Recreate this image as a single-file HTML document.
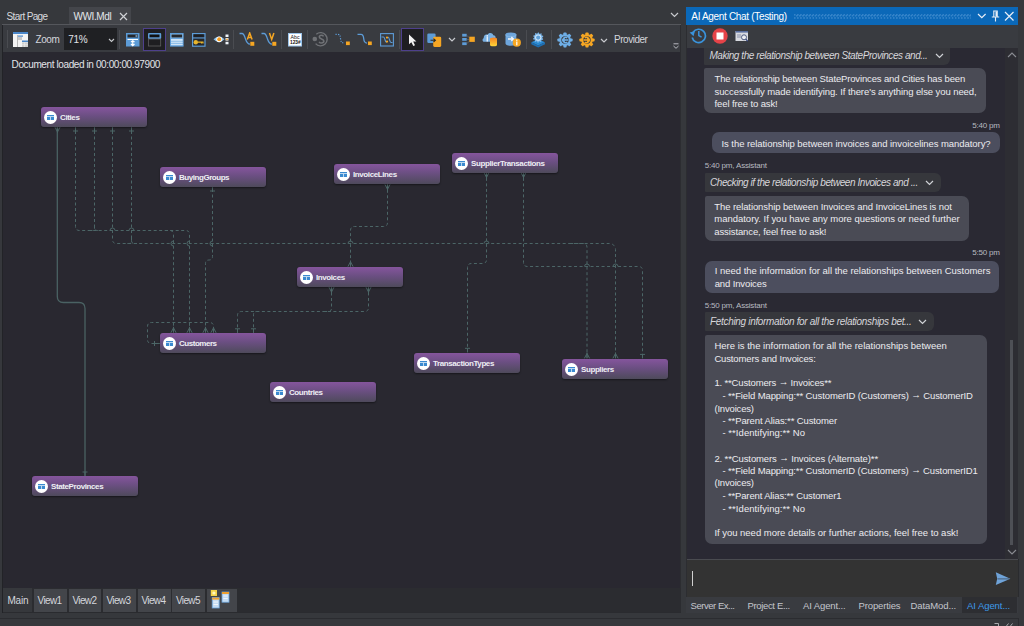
<!DOCTYPE html><html><head><meta charset="utf-8"><style>
html,body{margin:0;padding:0;}
body{width:1024px;height:626px;overflow:hidden;position:relative;background:#36383c;font-family:"Liberation Sans",sans-serif;}
div{box-sizing:border-box;}
.node{position:absolute;width:106px;height:20px;border-radius:3px;background:linear-gradient(#85559d,#6b4f82 45%,#4e4a5b);box-shadow:0 1px 2px rgba(0,0,0,.45);}
.node .c{position:absolute;left:3px;top:4px;width:13px;height:13px;border-radius:50%;background:#fff;}
.node .c i{position:absolute;left:3px;top:3.6px;width:6.5px;height:5px;background:#3b8ad0;}
.node .c i:before{content:"";position:absolute;left:0;top:1.6px;width:6.5px;height:0.7px;background:#bcd8f0;}
.node .c i:after{content:"";position:absolute;left:3px;top:1.6px;width:0.7px;height:3.4px;background:#bcd8f0;}
</style></head><body>
<div style="position:absolute;left:69px;top:7px;width:62px;height:17px;background:#44464b;"></div>
<div style="position:absolute;left:6.60px;top:12.00px;font-size:10px;line-height:10px;color:#d8dade;letter-spacing:-0.639px;white-space:nowrap;">Start Page</div>
<div style="position:absolute;left:73.40px;top:12.00px;font-size:10px;line-height:10px;color:#e4e6ea;letter-spacing:-0.374px;white-space:nowrap;">WWI.Mdl</div>
<svg style="position:absolute;left:119px;top:12px" width="9" height="9"><path d="M1 1L8 8M8 1L1 8" stroke="#d0d2d6" stroke-width="1.2"/></svg>
<svg style="position:absolute;left:670px;top:12px" width="9" height="6"><path d="M1 1L4.5 4.5L8 1" stroke="#c8cace" stroke-width="1.2" fill="none"/></svg>
<div style="position:absolute;left:2px;top:24px;width:679px;height:1px;background:#55575c;"></div>
<div style="position:absolute;left:2px;top:25px;width:678px;height:27px;background:#393b40;"></div>
<div style="position:absolute;left:7px;top:30px;width:1px;height:18px;background:#4a4c51;"></div>
<div style="position:absolute;left:64px;top:28px;width:53px;height:22px;background:#1f2023;"></div>
<div style="position:absolute;left:35.60px;top:35.00px;font-size:10px;line-height:10px;color:#d4d6dc;letter-spacing:-0.454px;white-space:nowrap;">Zoom</div>
<div style="position:absolute;left:68.30px;top:35.00px;font-size:10px;line-height:10px;color:#e0e2e6;letter-spacing:-0.357px;white-space:nowrap;">71%</div>
<svg style="position:absolute;left:108px;top:38px" width="7" height="5"><path d="M1 1L3.5 3.5L6 1" stroke="#c8cace" stroke-width="1.1" fill="none"/></svg>
<div style="position:absolute;left:119px;top:30px;width:1px;height:19px;background:#4a4c51;"></div>
<div style="position:absolute;left:233px;top:30px;width:1px;height:19px;background:#4a4c51;"></div>
<div style="position:absolute;left:281px;top:30px;width:1px;height:19px;background:#4a4c51;"></div>
<div style="position:absolute;left:307px;top:30px;width:1px;height:19px;background:#4a4c51;"></div>
<div style="position:absolute;left:399px;top:30px;width:1px;height:19px;background:#4a4c51;"></div>
<div style="position:absolute;left:526px;top:30px;width:1px;height:19px;background:#4a4c51;"></div>
<div style="position:absolute;left:551px;top:30px;width:1px;height:19px;background:#4a4c51;"></div>
<div style="position:absolute;left:143px;top:28px;width:23px;height:23px;background:#1e1e21;border:1px solid #4e408c;"></div>
<div style="position:absolute;left:401px;top:28px;width:23px;height:23px;background:#1e1e21;border:1px solid #4e408c;"></div>
<svg style="position:absolute;left:13px;top:32px" width="15" height="15" viewBox="0 0 15 15"><rect x="0" y="0" width="15" height="15" fill="#f4f4f4"/><rect x="0" y="0" width="15" height="2" fill="#4a86c8"/><rect x="4" y="3" width="1" height="12" fill="#b8b8b8"/><rect x="5" y="3.5" width="5" height="1.2" fill="#4a86c8"/><rect x="5" y="5" width="4" height="3" fill="#c8c8c8"/><rect x="9" y="8.5" width="6" height="1.6" fill="#4a86c8"/><rect x="9" y="10.5" width="6" height="4.5" fill="#cfcfcf"/><path d="M11.5 10.5V15M9 12.7H15" stroke="#eee" stroke-width=".6"/></svg>
<svg style="position:absolute;left:125.5px;top:32.5px" width="14" height="14" viewBox="0 0 14 14"><rect x="0" y="0" width="13.5" height="13.5" fill="#5d9cd7"/><rect x="1.5" y="1.5" width="10.5" height="3" fill="#26282c"/><rect x="9.5" y="2.3" width="2" height="1.4" fill="#8fb8e0"/><rect x="1.5" y="6" width="10.5" height="1" fill="#fff"/><path d="M6.75 7.5V12.5M5 9L6.75 7.7L8.5 9M5 11L6.75 12.6L8.5 11" stroke="#fff" stroke-width="1.2" fill="none"/></svg>
<svg style="position:absolute;left:148px;top:33px" width="14" height="14" viewBox="0 0 14 14"><rect x="0" y="0" width="13.2" height="6" rx="1" fill="#5d9cd7"/><rect x="1.5" y="1.5" width="10" height="2.8" fill="#111"/><rect x="0.5" y="6" width="12.2" height="7" fill="none" stroke="#5e5e60" stroke-width="0.8"/></svg>
<svg style="position:absolute;left:169.5px;top:32.5px" width="14" height="14" viewBox="0 0 14 14"><rect x="0.5" y="0.5" width="12.6" height="12.6" fill="#8fc0ea" stroke="#5d9cd7"/><rect x="1.5" y="1.5" width="10.6" height="3" fill="#26282c"/><rect x="1" y="5" width="11.6" height="1" fill="#6aa5dc"/><rect x="1" y="6.3" width="11.6" height="1.3" fill="#e8f2fb"/><rect x="1" y="8.8" width="11.6" height="1" fill="#d0e4f6"/><rect x="1" y="11" width="11.6" height="1" fill="#d0e4f6"/></svg>
<svg style="position:absolute;left:192px;top:32.5px" width="14" height="14" viewBox="0 0 14 14"><rect x="0.6" y="0.6" width="12.4" height="12.6" fill="#26282c" stroke="#5d9cd7" stroke-width="1.2"/><rect x="0.6" y="4.4" width="12.4" height="1.1" fill="#5d9cd7"/><rect x="2" y="1.6" width="9.5" height="2" fill="#1c1d20"/><circle cx="3.8" cy="9.2" r="2.2" fill="#e8b52c"/><path d="M5.5 9.2H11.5M9.5 9.2V10.6M11 9.2V10.4" stroke="#e8b52c" stroke-width="1.2"/></svg>
<svg style="position:absolute;left:212.5px;top:34px" width="16" height="11" viewBox="0 0 16 11"><path d="M0.5 5.3Q6 -0.5 11.5 5.3Q6 11 0.5 5.3Z" fill="#8ec4ee"/><circle cx="6.2" cy="5.3" r="2.9" fill="#fff"/><circle cx="6.2" cy="5.3" r="2" fill="#f29a1e"/><rect x="12.5" y="0.5" width="3" height="2.5" fill="#eef4fa"/><rect x="12.5" y="4" width="3" height="2.6" fill="#eef4fa"/><circle cx="14" cy="5.3" r="0.9" fill="#f29a1e"/><rect x="12.5" y="7.8" width="3" height="2.5" fill="#eef4fa"/></svg>
<svg style="position:absolute;left:238.5px;top:32px" width="16" height="15" viewBox="0 0 16 15"><path d="M0.5 1.5H3C5 1.5 5.5 4 6.5 7C7.5 10 8.5 12 11 12.2" stroke="#5d9cd7" stroke-width="1.3" fill="none"/><path d="M8.3 7.5L10.7 1L13.1 7.5M9.1 5.4H12.3" stroke="#f5a623" stroke-width="1.5" fill="none"/><rect x="11.3" y="9.8" width="4" height="4" fill="#f5a623"/></svg>
<svg style="position:absolute;left:260.5px;top:32px" width="16" height="15" viewBox="0 0 16 15"><path d="M0.5 1.5H3C5 1.5 5.5 4 6.5 7C7.5 10 8.5 12 11 12.2" stroke="#5d9cd7" stroke-width="1.3" fill="none"/><path d="M8.5 1L10.7 7.5L12.9 1" stroke="#f5a623" stroke-width="1.5" fill="none"/><rect x="11.3" y="9.8" width="4" height="4" fill="#f5a623"/></svg>
<svg style="position:absolute;left:287.5px;top:32.5px" width="14" height="14" viewBox="0 0 14 14"><rect x="0.5" y="0.5" width="13" height="12.5" fill="#fff" stroke="#9cc4ea"/><text x="2.6" y="6.1" font-family="Liberation Sans" font-size="5.2" fill="#111">Abc</text><text x="2" y="11.4" font-family="Liberation Sans" font-size="4.8" font-weight="bold" fill="#111">123#</text></svg>
<svg style="position:absolute;left:311.5px;top:31px" width="17" height="16" viewBox="0 0 17 16"><path d="M4.3 3.2A6.6 6.6 0 1 1 3.6 12.6" stroke="#707276" stroke-width="1.4" fill="none"/><circle cx="2.8" cy="8" r="2.3" fill="#707276"/><path d="M11.6 5.4C11 4.6 10.3 4.3 9.5 4.3C8.2 4.3 7.3 5 7.3 6.1C7.3 8.4 11.9 7.6 11.9 10.1C11.9 11.3 10.9 12 9.5 12C8.4 12 7.6 11.6 7.1 10.8" stroke="#707276" stroke-width="1.5" fill="none"/></svg>
<svg style="position:absolute;left:334.5px;top:33px" width="16" height="14" viewBox="0 0 16 14"><path d="M0.5 1.3H3C5 1.3 5.3 3 5.5 5.5C5.7 8.5 6.5 10 9.5 10.2" stroke="#5d9cd7" stroke-width="1.2" stroke-dasharray="1.2 1.3" fill="none"/><rect x="11" y="8.5" width="3.8" height="3.6" fill="#f5a623"/></svg>
<svg style="position:absolute;left:357px;top:33px" width="16" height="14" viewBox="0 0 16 14"><path d="M0.5 1.3H4C6 1.3 6.5 3 6.7 5.5C6.9 8.5 7.5 10 10 10.2" stroke="#5d9cd7" stroke-width="1.3" fill="none"/><rect x="11" y="8.5" width="3.8" height="3.6" fill="#f5a623"/></svg>
<svg style="position:absolute;left:379.5px;top:32.5px" width="15" height="14" viewBox="0 0 15 14"><rect x="0.6" y="0.6" width="12.8" height="12.4" fill="none" stroke="#5d9cd7" stroke-width="1.1"/><path d="M1.5 4H3.5C5 4 5 9.5 6.5 9.5M8 4C9.5 4 9.5 9.5 11 9.5H12.5" stroke="#5d9cd7" stroke-width="1.1" fill="none"/><circle cx="7" cy="4.6" r="1.1" fill="#f5a623"/><circle cx="7" cy="8.6" r="1.1" fill="#f5a623"/></svg>
<svg style="position:absolute;left:408px;top:34px" width="10" height="13" viewBox="0 0 10 13"><path d="M1 0.5V10.2L3.4 8.2L5.3 12L7 11.2L5.2 7.6H8.4Z" fill="#f2f2f2"/></svg>
<svg style="position:absolute;left:427px;top:32.5px" width="15" height="15" viewBox="0 0 15 15"><rect x="0.3" y="0.5" width="8.3" height="9.5" rx="1.3" fill="#5d9cd7"/><rect x="6.2" y="3.7" width="8" height="10.2" rx="1.3" fill="#f5a623"/><path d="M3.5 7.3H7.5M6.5 5.6L8.4 7.3L6.5 9" stroke="#2b2b2b" stroke-width="1.1" fill="none"/></svg>
<svg style="position:absolute;left:447.5px;top:37px" width="8" height="6" viewBox="0 0 8 6"><path d="M1 1L4 4L7 1" stroke="#c8cace" stroke-width="1.2" fill="none"/></svg>
<svg style="position:absolute;left:600px;top:37.5px" width="8" height="6" viewBox="0 0 8 6"><path d="M1 1L4 4L7 1" stroke="#c8cace" stroke-width="1.2" fill="none"/></svg>
<svg style="position:absolute;left:461.5px;top:32.5px" width="14" height="14" viewBox="0 0 14 14"><rect x="0.2" y="0.8" width="4.5" height="2.8" fill="#5d9cd7"/><rect x="0.2" y="5" width="4.5" height="2.8" fill="#5d9cd7"/><rect x="0.2" y="9.3" width="4.5" height="2.8" fill="#5d9cd7"/><path d="M4.7 2.2L7.5 5M4.7 6.4H7.3M4.7 10.7L7.5 8" stroke="#6b6e74" stroke-width=".7"/><rect x="7.3" y="3.7" width="5.5" height="5.2" fill="#f5a623"/></svg>
<svg style="position:absolute;left:482px;top:32px" width="16" height="15" viewBox="0 0 16 15"><path d="M2.2 9.8C0.2 9.8 0 7 1.7 6.3C1.5 3.5 3.5 2 5.5 2.8C6.5 0.5 10.5 0.3 11.3 3.3C13.2 3.3 14 5 13.5 6.5L12 9.8Z" fill="#79b0e2"/><rect x="4.6" y="4.5" width="1.3" height="5" fill="#f0f4f8"/><circle cx="5.25" cy="3.8" r="0.8" fill="#f0f4f8"/><defs><linearGradient id="gdb" x1="0" y1="0" x2="0" y2="1"><stop offset="0" stop-color="#f57f20"/><stop offset="1" stop-color="#ffd83a"/></linearGradient></defs><path d="M8 6.9A3.5 1.5 0 0 1 15 6.9V12.8A3.5 1.5 0 0 1 8 12.8Z" fill="url(#gdb)"/></svg>
<svg style="position:absolute;left:504.5px;top:32px" width="17" height="15" viewBox="0 0 17 15"><path d="M0.5 2.6A5.4 2.1 0 0 1 11.3 2.6V11.6A5.4 2.1 0 0 1 0.5 11.6Z" fill="#6ea6dc"/><path d="M0.5 2.6A5.4 2.1 0 0 0 11.3 2.6" stroke="#8bbbe6" stroke-width=".8" fill="none"/><path d="M3 7H8.3M6.3 5L8.5 7L6.3 9" stroke="#f4f8fc" stroke-width="1.3" fill="none"/><circle cx="11.8" cy="10.7" r="4.1" fill="#f5a623"/><rect x="11.2" y="9.5" width="1.2" height="3.8" fill="#fff"/><circle cx="11.8" cy="8.2" r=".7" fill="#fff"/></svg>
<svg style="position:absolute;left:531px;top:31.5px" width="15" height="16" viewBox="0 0 15 16"><path d="M0.3 10.3L7.2 7.3L14 10.3L7.2 13.5Z" fill="#2a8ad2"/><path d="M0.3 10.3V12.3L7.2 15.4L14 12.3V10.3L7.2 13.5Z" fill="#1d6fb4"/><path d="M7.00 0.40 L7.81 0.44 L8.31 1.65 L8.92 1.88 L10.09 1.28 L10.73 1.78 L10.42 3.06 L10.78 3.60 L12.08 3.80 L12.30 4.59 L11.30 5.44 L11.27 6.08 L12.20 7.01 L11.92 7.78 L10.61 7.88 L10.21 8.38 L10.42 9.68 L9.74 10.14 L8.62 9.45 L8.00 9.62 L7.40 10.80 L6.59 10.76 L6.09 9.55 L5.48 9.32 L4.31 9.92 L3.67 9.42 L3.98 8.14 L3.62 7.60 L2.32 7.40 L2.10 6.61 L3.10 5.76 L3.13 5.12 L2.20 4.19 L2.48 3.42 L3.79 3.32 L4.19 2.82 L3.98 1.52 L4.66 1.06 L5.78 1.75 L6.40 1.58Z" fill="#7bb6ea"/><circle cx="7.2" cy="5.6" r="3.1" fill="#cfe5f7"/><circle cx="7.2" cy="5.6" r="2.1" fill="#5fa0d9"/></svg>
<svg style="position:absolute;left:556.5px;top:31.5px" width="16" height="16" viewBox="0 0 16 16"><rect x="6.4" y="0.40000000000000036" width="3.2" height="4" rx="0.8" fill="#6eaee6" transform="rotate(0 8 8)"/><rect x="6.4" y="0.40000000000000036" width="3.2" height="4" rx="0.8" fill="#6eaee6" transform="rotate(45 8 8)"/><rect x="6.4" y="0.40000000000000036" width="3.2" height="4" rx="0.8" fill="#6eaee6" transform="rotate(90 8 8)"/><rect x="6.4" y="0.40000000000000036" width="3.2" height="4" rx="0.8" fill="#6eaee6" transform="rotate(135 8 8)"/><rect x="6.4" y="0.40000000000000036" width="3.2" height="4" rx="0.8" fill="#6eaee6" transform="rotate(180 8 8)"/><rect x="6.4" y="0.40000000000000036" width="3.2" height="4" rx="0.8" fill="#6eaee6" transform="rotate(225 8 8)"/><rect x="6.4" y="0.40000000000000036" width="3.2" height="4" rx="0.8" fill="#6eaee6" transform="rotate(270 8 8)"/><rect x="6.4" y="0.40000000000000036" width="3.2" height="4" rx="0.8" fill="#6eaee6" transform="rotate(315 8 8)"/><circle cx="8" cy="8" r="5.9" fill="#6eaee6"/><circle cx="8" cy="8" r="3.7" fill="#393b40"/><path d="M10.3 5.9A2.7 2.7 0 1 0 10.3 10.1" stroke="#6eaee6" stroke-width="1.4" fill="none"/><path d="M11.2 8H5.8M7.6 6.2L5.7 8L7.6 9.8" stroke="#6eaee6" stroke-width="1.3" fill="none"/></svg>
<svg style="position:absolute;left:578.6px;top:31.8px" width="16" height="16" viewBox="0 0 16 16"><rect x="6.4" y="0.40000000000000036" width="3.2" height="4" rx="0.8" fill="#f5a623" transform="rotate(0 8 8)"/><rect x="6.4" y="0.40000000000000036" width="3.2" height="4" rx="0.8" fill="#f5a623" transform="rotate(45 8 8)"/><rect x="6.4" y="0.40000000000000036" width="3.2" height="4" rx="0.8" fill="#f5a623" transform="rotate(90 8 8)"/><rect x="6.4" y="0.40000000000000036" width="3.2" height="4" rx="0.8" fill="#f5a623" transform="rotate(135 8 8)"/><rect x="6.4" y="0.40000000000000036" width="3.2" height="4" rx="0.8" fill="#f5a623" transform="rotate(180 8 8)"/><rect x="6.4" y="0.40000000000000036" width="3.2" height="4" rx="0.8" fill="#f5a623" transform="rotate(225 8 8)"/><rect x="6.4" y="0.40000000000000036" width="3.2" height="4" rx="0.8" fill="#f5a623" transform="rotate(270 8 8)"/><rect x="6.4" y="0.40000000000000036" width="3.2" height="4" rx="0.8" fill="#f5a623" transform="rotate(315 8 8)"/><circle cx="8" cy="8" r="5.9" fill="#f5a623"/><circle cx="8" cy="8" r="3.7" fill="#393b40"/><path d="M5.8 5.9A2.7 2.7 0 1 1 5.8 10.1" stroke="#f5a623" stroke-width="1.4" fill="none"/><path d="M4.6 8H9.8M8.1 6.2L10 8L8.1 9.8" stroke="#f5a623" stroke-width="1.3" fill="none"/></svg>
<svg style="position:absolute;left:672px;top:42.8px" width="8" height="8" viewBox="0 0 8 8"><path d="M1.5 0.8H6.5M1.5 3L4 5.3L6.5 3" stroke="#b8bac0" stroke-width="1" fill="none"/></svg>
<div style="position:absolute;left:614.00px;top:35.00px;font-size:10px;line-height:10px;color:#d4d6dc;letter-spacing:-0.477px;white-space:nowrap;">Provider</div>
<div style="position:absolute;left:2px;top:52px;width:679px;height:536px;background:#292830;"></div>
<div style="position:absolute;left:680px;top:25px;width:1px;height:588px;background:#2c2d31;"></div>
<div style="position:absolute;left:11.60px;top:60.00px;font-size:10px;line-height:10px;color:#e2e4e8;letter-spacing:-0.389px;white-space:nowrap;">Document loaded in 00:00:00.97900</div>
<svg style="position:absolute;left:0;top:0" width="681" height="588" fill="none">
<path d="M57.3 127 L57.30 296.50 Q57.3 302.5 63.30 302.50 L79.00 302.50 Q85 302.5 85.00 308.50 L85 476" stroke="#4a6263" stroke-width="1.3"/>
<path d="M75.5 131 L75.50 226.50 Q75.5 230.5 79.50 230.50 L185.50 230.50 Q189.5 230.5 189.50 234.50 L189.5 332.8" stroke="#4c6667" stroke-width="1" stroke-dasharray="3 2.5"/>
<path d="M94.5 131 L94.50 227.75 Q94.5 230.5 97.25 230.50 L100 230.5" stroke="#4c6667" stroke-width="1" stroke-dasharray="3 2.5"/>
<path d="M94.5 226 L94.50 228.25 Q94.5 230.5 92.25 230.50 L89 230.5" stroke="#4c6667" stroke-width="1" stroke-dasharray="3 2.5"/>
<path d="M112.5 131 L112.50 239.50 Q112.5 243.5 116.50 243.50 L609.53 243.50 Q612 243.5 613.75 245.25 L613.75 245.25 Q615.5 247 615.50 249.47 L615.5 358.4" stroke="#4c6667" stroke-width="1" stroke-dasharray="3 2.5"/>
<path d="M131.5 131 L131.50 240.75 Q131.5 243.5 134.25 243.50 L137 243.5" stroke="#4c6667" stroke-width="1" stroke-dasharray="3 2.5"/>
<path d="M131.5 238 L131.50 240.75 Q131.5 243.5 128.75 243.50 L125 243.5" stroke="#4c6667" stroke-width="1" stroke-dasharray="3 2.5"/>
<path d="M165 230.5 L169.50 230.50 Q173.5 230.5 173.50 234.50 L173.5 332.8" stroke="#4c6667" stroke-width="1" stroke-dasharray="3 2.5"/>
<path d="M212.5 189 L212.50 256.50 Q212.5 260 209.00 260.00 L209.00 260.00 Q205.5 260 205.50 263.50 L205.5 332.8" stroke="#4c6667" stroke-width="1" stroke-dasharray="3 2.5"/>
<path d="M160 343.5 L151.50 343.50 Q147.5 343.5 147.50 339.50 L147.50 326.50 Q147.5 322.5 151.50 322.50 L209.50 322.50 Q213.5 322.5 213.50 326.50 L213.5 332.8" stroke="#4c6667" stroke-width="1" stroke-dasharray="3 2.5"/>
<path d="M237.5 332.8 L237.50 315.50 Q237.5 311.5 241.50 311.50 L364.50 311.50 Q368.5 311.5 368.50 307.50 L368.5 287" stroke="#4c6667" stroke-width="1" stroke-dasharray="3 2.5"/>
<path d="M253.5 332.8 L253.50 314.75 Q253.5 311.5 256.75 311.50 L260 311.5" stroke="#4c6667" stroke-width="1" stroke-dasharray="3 2.5"/>
<path d="M331.5 287 L331.50 308.25 Q331.5 311.5 328.25 311.50 L325 311.5" stroke="#4c6667" stroke-width="1" stroke-dasharray="3 2.5"/>
<path d="M387.5 184.3 L387.50 222.50 Q387.5 226.5 383.50 226.50 L354.50 226.50 Q350.5 226.5 350.50 230.50 L350.5 266.7" stroke="#4c6667" stroke-width="1" stroke-dasharray="3 2.5"/>
<path d="M486.5 172.4 L486.50 259.50 Q486.5 263.5 482.50 263.50 L471.50 263.50 Q467.5 263.5 467.50 267.50 L467.5 352.3" stroke="#4c6667" stroke-width="1" stroke-dasharray="3 2.5"/>
<path d="M523.5 172.4 L523.50 262.50 Q523.5 266.5 527.50 266.50 L638.50 266.50 Q642.5 266.5 642.50 270.50 L642.5 358.4" stroke="#4c6667" stroke-width="1" stroke-dasharray="3 2.5"/>
<path d="M570 243.5 L583.00 243.50 Q587 243.5 587.00 247.50 L587 358.4" stroke="#4c6667" stroke-width="1" stroke-dasharray="3 2.5"/>
<path d="M73.0 131 L78.0 131 M75.5 127 L75.5 131 M92.0 131 L97.0 131 M94.5 127 L94.5 131 M110.0 131 L115.0 131 M112.5 127 L112.5 131 M129.0 131 L134.0 131 M131.5 127 L131.5 131 M54.9 127 L57.5 132 L60.1 127 M57.5 127 L57.5 133 M210.0 191 L215.0 191 M212.5 187 L212.5 191 M170.9 332.8 L173.5 327.8 L176.1 332.8 M173.5 332.8 L173.5 326.8 M186.9 332.8 L189.5 327.8 L192.1 332.8 M189.5 332.8 L189.5 326.8 M202.9 332.8 L205.5 327.8 L208.1 332.8 M205.5 332.8 L205.5 326.8 M210.9 332.8 L213.5 327.8 L216.1 332.8 M213.5 332.8 L213.5 326.8 M235.0 328.8 L240.0 328.8 M237.5 332.8 L237.5 328.8 M251.0 328.8 L256.0 328.8 M253.5 332.8 L253.5 328.8 M347.9 266.7 L350.5 261.7 L353.1 266.7 M350.5 266.7 L350.5 260.7 M328.9 287 L331.5 292 L334.1 287 M331.5 287 L331.5 293 M365.9 287 L368.5 292 L371.1 287 M368.5 287 L368.5 293 M384.9 184.3 L387.5 189.3 L390.1 184.3 M387.5 184.3 L387.5 190.3 M483.9 172.4 L486.5 177.4 L489.1 172.4 M486.5 172.4 L486.5 178.4 M520.9 172.4 L523.5 177.4 L526.1 172.4 M523.5 172.4 L523.5 178.4 M465.0 348.3 L470.0 348.3 M467.5 352.3 L467.5 348.3 M584.4 358.4 L587 353.4 L589.6 358.4 M587 358.4 L587 352.4 M612.9 358.4 L615.5 353.4 L618.1 358.4 M615.5 358.4 L615.5 352.4 M640.0 354.4 L645.0 354.4 M642.5 358.4 L642.5 354.4 M82.5 472 L87.5 472 M85 476 L85 472 M160 343.5 L154.5 343.5 M154.5 341 L154.5 346 " stroke="#4c6667" stroke-width="1"/>
<path d="M110.0 230.5 A2.5 2.5 0 0 1 115.0 230.5 M129.0 230.5 A2.5 2.5 0 0 1 134.0 230.5 M348.0 243.5 A2.5 2.5 0 0 1 353.0 243.5 M484.0 243.5 A2.5 2.5 0 0 1 489.0 243.5 M584.5 266.5 A2.5 2.5 0 0 1 589.5 266.5 M613.0 266.5 A2.5 2.5 0 0 1 618.0 266.5 M173.5 241.0 A2.5 2.5 0 0 0 173.5 246.0 M189.5 241.0 A2.5 2.5 0 0 0 189.5 246.0 M212.5 241.0 A2.5 2.5 0 0 0 212.5 246.0 " stroke="#4c6667" stroke-width="1"/>
</svg>
<div class="node" style="left:41px;top:107px;"><div class="c"><i></i></div></div>
<div style="position:absolute;left:60.00px;top:114.00px;font-size:8px;line-height:8px;color:#eeeef4;letter-spacing:-0.392px;white-space:nowrap;font-weight:bold;">Cities</div>
<div class="node" style="left:160px;top:167px;"><div class="c"><i></i></div></div>
<div style="position:absolute;left:179.00px;top:174.00px;font-size:8px;line-height:8px;color:#eeeef4;letter-spacing:-0.455px;white-space:nowrap;font-weight:bold;">BuyingGroups</div>
<div class="node" style="left:334px;top:164px;"><div class="c"><i></i></div></div>
<div style="position:absolute;left:353.00px;top:171.00px;font-size:8px;line-height:8px;color:#eeeef4;letter-spacing:-0.397px;white-space:nowrap;font-weight:bold;">InvoiceLines</div>
<div class="node" style="left:452px;top:153px;"><div class="c"><i></i></div></div>
<div style="position:absolute;left:471.00px;top:160.00px;font-size:8px;line-height:8px;color:#eeeef4;letter-spacing:-0.385px;white-space:nowrap;font-weight:bold;">SupplierTransactions</div>
<div class="node" style="left:297px;top:267px;"><div class="c"><i></i></div></div>
<div style="position:absolute;left:316.00px;top:274.00px;font-size:8px;line-height:8px;color:#eeeef4;letter-spacing:-0.412px;white-space:nowrap;font-weight:bold;">Invoices</div>
<div class="node" style="left:414px;top:353px;"><div class="c"><i></i></div></div>
<div style="position:absolute;left:433.00px;top:360.00px;font-size:8px;line-height:8px;color:#eeeef4;letter-spacing:-0.405px;white-space:nowrap;font-weight:bold;">TransactionTypes</div>
<div class="node" style="left:562px;top:359px;"><div class="c"><i></i></div></div>
<div style="position:absolute;left:581.00px;top:366.00px;font-size:8px;line-height:8px;color:#eeeef4;letter-spacing:-0.410px;white-space:nowrap;font-weight:bold;">Suppliers</div>
<div class="node" style="left:270px;top:382px;"><div class="c"><i></i></div></div>
<div style="position:absolute;left:289.00px;top:389.00px;font-size:8px;line-height:8px;color:#eeeef4;letter-spacing:-0.420px;white-space:nowrap;font-weight:bold;">Countries</div>
<div class="node" style="left:160px;top:333px;"><div class="c"><i></i></div></div>
<div style="position:absolute;left:179.00px;top:340.00px;font-size:8px;line-height:8px;color:#eeeef4;letter-spacing:-0.470px;white-space:nowrap;font-weight:bold;">Customers</div>
<div class="node" style="left:32px;top:476px;"><div class="c"><i></i></div></div>
<div style="position:absolute;left:51.00px;top:483.00px;font-size:8px;line-height:8px;color:#eeeef4;letter-spacing:-0.400px;white-space:nowrap;font-weight:bold;">StateProvinces</div>
<div style="position:absolute;left:2px;top:588px;width:679px;height:24px;background:#2b2c30;"></div>
<div style="position:absolute;left:3px;top:588px;width:29px;height:24px;background:#36383c;"></div>
<div style="position:absolute;left:34px;top:589px;width:33px;height:23px;background:#43454a;"></div>
<div style="position:absolute;left:69px;top:589px;width:32px;height:23px;background:#43454a;"></div>
<div style="position:absolute;left:103px;top:589px;width:33px;height:23px;background:#43454a;"></div>
<div style="position:absolute;left:138px;top:589px;width:33px;height:23px;background:#43454a;"></div>
<div style="position:absolute;left:172px;top:589px;width:33px;height:23px;background:#43454a;"></div>
<div style="position:absolute;left:207px;top:589px;width:30px;height:23px;background:#43454a;"></div>
<div style="position:absolute;left:7.50px;top:596.00px;font-size:10px;line-height:10px;color:#d4d6dc;letter-spacing:-0.225px;white-space:nowrap;">Main</div>
<div style="position:absolute;left:37.60px;top:596.00px;font-size:10px;line-height:10px;color:#d4d6dc;letter-spacing:-0.639px;white-space:nowrap;">View1</div>
<div style="position:absolute;left:72.50px;top:596.00px;font-size:10px;line-height:10px;color:#d4d6dc;letter-spacing:-0.639px;white-space:nowrap;">View2</div>
<div style="position:absolute;left:106.50px;top:596.00px;font-size:10px;line-height:10px;color:#d4d6dc;letter-spacing:-0.639px;white-space:nowrap;">View3</div>
<div style="position:absolute;left:141.50px;top:596.00px;font-size:10px;line-height:10px;color:#d4d6dc;letter-spacing:-0.639px;white-space:nowrap;">View4</div>
<div style="position:absolute;left:176.00px;top:596.00px;font-size:10px;line-height:10px;color:#d4d6dc;letter-spacing:-0.639px;white-space:nowrap;">View5</div>
<div style="position:absolute;left:2px;top:612px;width:679px;height:1px;background:#2a2b2f;"></div>
<div style="position:absolute;left:2px;top:25px;width:1px;height:588px;background:#222327;"></div>
<div style="position:absolute;left:0px;top:618px;width:1018px;height:1px;background:#2b2c30;"></div>
<div style="position:absolute;left:1018px;top:618px;width:1px;height:8px;background:#2b2c30;"></div>
<svg style="position:absolute;left:993px;top:623px" width="24" height="3"><path d="M1.5 0.5H5.5V3M13.5 3L15.5 0.5M19.5 0.5L17.5 3" stroke="#a8aaae" stroke-width="1" fill="none"/></svg>
<svg style="position:absolute;left:207px;top:589px" width="30" height="23"><rect x="3.8" y="1" width="6.2" height="6" fill="#f2d24a"/><circle cx="6.9" cy="4" r="1.6" fill="#fff6c0"/><rect x="5.2" y="8.6" width="7" height="10.4" fill="#c5dcf3" stroke="#6aa3db" stroke-width=".8"/><rect x="5.2" y="8.6" width="7" height="2" fill="#f0a030"/><path d="M6.5 13H11M6.5 15.5H11" stroke="#fff" stroke-width=".7"/><rect x="15" y="3" width="7" height="10.2" fill="#c5dcf3" stroke="#6aa3db" stroke-width=".8"/><rect x="15" y="3" width="7" height="2" fill="#f0a030"/><path d="M16.3 7H20.7M16.3 9.5H20.7" stroke="#fff" stroke-width=".7"/></svg>
<div style="position:absolute;left:686px;top:7px;width:332px;height:18px;background:#0b68b8;"></div>
<div style="position:absolute;left:794px;top:13.5px;width:177px;height:5px;background-image:radial-gradient(circle at 0.75px 0.75px,rgba(110,170,225,.4) 0.6px,transparent 0.9px);background-size:3.1px 3.2px;"></div>
<div style="position:absolute;left:795.5px;top:15.1px;width:176px;height:2px;background-image:radial-gradient(circle at 0.75px 0.75px,rgba(110,170,225,.4) 0.6px,transparent 0.9px);background-size:3.1px 3.2px;"></div>
<svg style="position:absolute;left:977px;top:13px" width="10" height="6"><path d="M1 1L4.8 4.6L8.6 1" stroke="#e8eef6" stroke-width="1.2" fill="none"/></svg>
<svg style="position:absolute;left:990px;top:10px" width="11" height="12"><path d="M3.2 1H7.8M3.8 1V6.5M7.2 1V6.5M1.8 7H9.2M5.5 7V11.5" stroke="#e8eef6" stroke-width="1.1" fill="none"/><rect x="5.5" y="1.5" width="1.7" height="5" fill="#e8eef6"/></svg>
<svg style="position:absolute;left:1004px;top:11px" width="11" height="11"><path d="M1 1L9.5 9.5M9.5 1L1 9.5" stroke="#e8eef6" stroke-width="1.2"/></svg>
<div style="position:absolute;left:691.30px;top:12.00px;font-size:10px;line-height:10px;color:#ffffff;letter-spacing:-0.324px;white-space:nowrap;">AI Agent Chat (Testing)</div>
<div style="position:absolute;left:686px;top:25px;width:332px;height:23px;background:#393b40;"></div>
<div style="position:absolute;left:686px;top:48px;width:332px;height:511px;background:#2a2933;"></div>
<svg style="position:absolute;left:688.5px;top:26.3px" width="18" height="18" viewBox="0 0 18 18"><path d="M4.1 6.3A6.7 6.7 0 1 1 3.2 11.5" stroke="#3a93dc" stroke-width="1.7" fill="none"/><path d="M0.6 6.5L4.6 10.3L5.8 5.2Z" fill="#3a93dc"/><path d="M9.8 5.1V9.6L12.6 11.2" stroke="#3a93dc" stroke-width="1.5" fill="none"/></svg>
<svg style="position:absolute;left:712px;top:28px" width="16" height="16" viewBox="0 0 16 16"><circle cx="8" cy="8" r="7.7" fill="#e54348"/><rect x="4.5" y="4.5" width="7" height="7" fill="#fff"/></svg>
<svg style="position:absolute;left:734.5px;top:29.5px" width="15" height="14" viewBox="0 0 15 14"><rect x="0.5" y="1" width="12.5" height="10" fill="#d8dae0"/><rect x="0.5" y="1" width="12.5" height="1.6" fill="#5a6fa0"/><rect x="2" y="4.5" width="4" height="1" fill="#8a8fa8"/><rect x="2" y="6.5" width="4" height="1" fill="#8a8fa8"/><circle cx="9" cy="7.3" r="2.5" fill="#e9ecf2" stroke="#4d5a80" stroke-width="1"/><path d="M10.8 9.2L12.8 11.3" stroke="#2a3a70" stroke-width="1.2"/></svg>
<div style="position:absolute;left:1005px;top:48px;width:13px;height:511px;background:#2d2d33;"></div>
<div style="position:absolute;left:704.4px;top:48px;width:245.4px;height:16.7px;background:#36373c;border-radius:0 0 6px 1px;"></div>
<div style="position:absolute;left:709.40px;top:51.00px;font-size:10px;line-height:10px;color:#d6d6da;letter-spacing:-0.440px;white-space:nowrap;font-style:italic;">Making the relationship between StateProvinces and...</div>
<svg style="position:absolute;left:934.5px;top:53px" width="9" height="6"><path d="M1 1L4.5 4.5L8 1" stroke="#d0d2d6" stroke-width="1.2" fill="none"/></svg>
<div style="position:absolute;left:704.4px;top:68.1px;width:281.80px;height:45.00px;background:#4a4b55;border-radius:2px 7px 7px 7px;"></div>
<div style="position:absolute;left:714.50px;top:74.00px;font-size:9.5px;line-height:9.5px;color:#ececf0;letter-spacing:-0.148px;white-space:nowrap;">The relationship between StateProvinces and Cities has been</div>
<div style="position:absolute;left:714.50px;top:87.00px;font-size:9.5px;line-height:9.5px;color:#ececf0;letter-spacing:-0.083px;white-space:nowrap;">successfully made identifying. If there's anything else you need,</div>
<div style="position:absolute;left:714.50px;top:99.00px;font-size:9.5px;line-height:9.5px;color:#ececf0;letter-spacing:-0.106px;white-space:nowrap;">feel free to ask!</div>
<div style="position:absolute;left:972.20px;top:122.00px;font-size:8px;line-height:8px;color:#b8bac0;letter-spacing:-0.184px;white-space:nowrap;">5:40 pm</div>
<div style="position:absolute;left:712.3px;top:132px;width:287.70px;height:21.40px;background:#4c4e5e;border-radius:7px;"></div>
<div style="position:absolute;left:721.50px;top:139.00px;font-size:9.5px;line-height:9.5px;color:#ececf0;letter-spacing:-0.062px;white-space:nowrap;">Is the relationship between invoices and invoicelines mandatory?</div>
<div style="position:absolute;left:704.70px;top:162.00px;font-size:8px;line-height:8px;color:#b8bac0;letter-spacing:-0.180px;white-space:nowrap;">5:40 pm, Assistant</div>
<div style="position:absolute;left:705px;top:172.8px;width:235.60px;height:19.30px;background:#36373c;border-radius:1px 6px 6px 1px;"></div>
<div style="position:absolute;left:710.00px;top:178.00px;font-size:10px;line-height:10px;color:#d6d6da;letter-spacing:-0.433px;white-space:nowrap;font-style:italic;">Checking if the relationship between Invoices and ...</div>
<svg style="position:absolute;left:924.9px;top:180px" width="9" height="6"><path d="M1 1L4.5 4.5L8 1" stroke="#d0d2d6" stroke-width="1.2" fill="none"/></svg>
<div style="position:absolute;left:705px;top:196px;width:263.60px;height:45.00px;background:#4a4b55;border-radius:2px 7px 7px 7px;"></div>
<div style="position:absolute;left:714.30px;top:202.00px;font-size:9.5px;line-height:9.5px;color:#ececf0;letter-spacing:-0.097px;white-space:nowrap;">The relationship between Invoices and InvoiceLines is not</div>
<div style="position:absolute;left:714.30px;top:214.00px;font-size:9.5px;line-height:9.5px;color:#ececf0;letter-spacing:-0.020px;white-space:nowrap;">mandatory. If you have any more questions or need further</div>
<div style="position:absolute;left:714.30px;top:227.00px;font-size:9.5px;line-height:9.5px;color:#ececf0;letter-spacing:-0.107px;white-space:nowrap;">assistance, feel free to ask!</div>
<div style="position:absolute;left:972.20px;top:249.00px;font-size:8px;line-height:8px;color:#b8bac0;letter-spacing:-0.184px;white-space:nowrap;">5:50 pm</div>
<div style="position:absolute;left:705.2px;top:260.5px;width:294.30px;height:32.20px;background:#4c4e5e;border-radius:7px;"></div>
<div style="position:absolute;left:714.70px;top:266.00px;font-size:9.5px;line-height:9.5px;color:#ececf0;letter-spacing:-0.014px;white-space:nowrap;">I need the information for all the relationships between Customers</div>
<div style="position:absolute;left:714.70px;top:279.00px;font-size:9.5px;line-height:9.5px;color:#ececf0;letter-spacing:-0.126px;white-space:nowrap;">and Invoices</div>
<div style="position:absolute;left:704.70px;top:302.00px;font-size:8px;line-height:8px;color:#b8bac0;letter-spacing:-0.180px;white-space:nowrap;">5:50 pm, Assistant</div>
<div style="position:absolute;left:705px;top:312px;width:228.60px;height:19.40px;background:#36373c;border-radius:1px 6px 6px 1px;"></div>
<div style="position:absolute;left:710.00px;top:317.00px;font-size:10px;line-height:10px;color:#d6d6da;letter-spacing:-0.320px;white-space:nowrap;font-style:italic;">Fetching information for all the relationships bet...</div>
<svg style="position:absolute;left:918.0px;top:319px" width="9" height="6"><path d="M1 1L4.5 4.5L8 1" stroke="#d0d2d6" stroke-width="1.2" fill="none"/></svg>
<div style="position:absolute;left:705px;top:334.9px;width:282.40px;height:208.70px;background:#4a4b55;border-radius:2px 7px 7px 7px;"></div>
<div style="position:absolute;left:714.40px;top:341.00px;font-size:9.5px;line-height:9.5px;color:#ececf0;letter-spacing:0.010px;white-space:nowrap;">Here is the information for all the relationships between</div>
<div style="position:absolute;left:714.40px;top:354.00px;font-size:9.5px;line-height:9.5px;color:#ececf0;letter-spacing:-0.143px;white-space:nowrap;">Customers and Invoices:</div>
<div style="position:absolute;left:714.40px;top:378.00px;font-size:9.5px;line-height:9.5px;color:#ececf0;letter-spacing:-0.150px;white-space:nowrap;">1. **Customers <span style="position:relative;top:-1.5px">→</span> Invoices**</div>
<div style="position:absolute;left:722.40px;top:391.00px;font-size:9.5px;line-height:9.5px;color:#ececf0;letter-spacing:-0.110px;white-space:nowrap;">- **Field Mapping:** CustomerID (Customers) <span style="position:relative;top:-1.5px">→</span> CustomerID</div>
<div style="position:absolute;left:714.40px;top:404.00px;font-size:9.5px;line-height:9.5px;color:#ececf0;letter-spacing:-0.175px;white-space:nowrap;">(Invoices)</div>
<div style="position:absolute;left:722.40px;top:416.00px;font-size:9.5px;line-height:9.5px;color:#ececf0;letter-spacing:-0.109px;white-space:nowrap;">- **Parent Alias:** Customer</div>
<div style="position:absolute;left:722.40px;top:428.00px;font-size:9.5px;line-height:9.5px;color:#ececf0;letter-spacing:0.064px;white-space:nowrap;">- **Identifying:** No</div>
<div style="position:absolute;left:714.40px;top:454.00px;font-size:9.5px;line-height:9.5px;color:#ececf0;letter-spacing:-0.111px;white-space:nowrap;">2. **Customers <span style="position:relative;top:-1.5px">→</span> Invoices (Alternate)**</div>
<div style="position:absolute;left:722.40px;top:466.00px;font-size:9.5px;line-height:9.5px;color:#ececf0;letter-spacing:-0.114px;white-space:nowrap;">- **Field Mapping:** CustomerID (Customers) <span style="position:relative;top:-1.5px">→</span> CustomerID1</div>
<div style="position:absolute;left:714.40px;top:478.00px;font-size:9.5px;line-height:9.5px;color:#ececf0;letter-spacing:-0.175px;white-space:nowrap;">(Invoices)</div>
<div style="position:absolute;left:722.40px;top:491.00px;font-size:9.5px;line-height:9.5px;color:#ececf0;letter-spacing:-0.140px;white-space:nowrap;">- **Parent Alias:** Customer1</div>
<div style="position:absolute;left:722.40px;top:504.00px;font-size:9.5px;line-height:9.5px;color:#ececf0;letter-spacing:0.064px;white-space:nowrap;">- **Identifying:** No</div>
<div style="position:absolute;left:714.40px;top:528.00px;font-size:9.5px;line-height:9.5px;color:#ececf0;letter-spacing:-0.024px;white-space:nowrap;">If you need more details or further actions, feel free to ask!</div>
<svg style="position:absolute;left:1007px;top:52px" width="10" height="6"><path d="M1 5L5 1L9 5" stroke="#8a8c92" stroke-width="1.1" fill="none"/></svg>
<svg style="position:absolute;left:1007px;top:549px" width="10" height="6"><path d="M1 1L5 5L9 1" stroke="#8a8c92" stroke-width="1.1" fill="none"/></svg>
<div style="position:absolute;left:1010px;top:340px;width:3px;height:205px;background:#4e5056;"></div>
<div style="position:absolute;left:686px;top:559px;width:332px;height:38px;background:#333333;"></div>
<div style="position:absolute;left:1018px;top:559px;width:1px;height:38px;background:#2a2b2e;"></div>
<div style="position:absolute;left:686px;top:597px;width:332px;height:1px;background:#2a2a2c;"></div>
<div style="position:absolute;left:686px;top:559px;width:332px;height:1px;background:#4a4b50;"></div>
<div style="position:absolute;left:692px;top:571px;width:1px;height:15px;background:#d0d0d0;"></div>
<svg style="position:absolute;left:995px;top:571px" width="17" height="15"><path d="M0.8 1.2L15.4 7.8L0.8 14.1L2.2 7.8Z" fill="#6fa3d8"/><path d="M2.6 7.9H14.5" stroke="#3d4a5a" stroke-width="0.8"/></svg>
<div style="position:absolute;left:686px;top:597px;width:332px;height:16px;background:#393b40;"></div>
<div style="position:absolute;left:962px;top:597px;width:55px;height:16px;background:#2d2e32;"></div>
<div style="position:absolute;left:690.60px;top:601.00px;font-size:9.5px;line-height:9.5px;color:#c4c6cc;letter-spacing:-0.475px;white-space:nowrap;">Server Ex...</div>
<div style="position:absolute;left:747.40px;top:601.00px;font-size:9.5px;line-height:9.5px;color:#c4c6cc;letter-spacing:-0.333px;white-space:nowrap;">Project E...</div>
<div style="position:absolute;left:803.00px;top:601.00px;font-size:9.5px;line-height:9.5px;color:#c4c6cc;letter-spacing:-0.114px;white-space:nowrap;">AI Agent...</div>
<div style="position:absolute;left:858.60px;top:601.00px;font-size:9.5px;line-height:9.5px;color:#c4c6cc;letter-spacing:-0.144px;white-space:nowrap;">Properties</div>
<div style="position:absolute;left:910.60px;top:601.00px;font-size:9.5px;line-height:9.5px;color:#c4c6cc;letter-spacing:-0.096px;white-space:nowrap;">DataMod...</div>
<div style="position:absolute;left:967.00px;top:601.00px;font-size:9.5px;line-height:9.5px;color:#3d9be9;letter-spacing:-0.064px;white-space:nowrap;">AI Agent...</div>
<div style="position:absolute;left:686px;top:25px;width:1px;height:572px;background:#2c2d31;"></div>
</body></html>
